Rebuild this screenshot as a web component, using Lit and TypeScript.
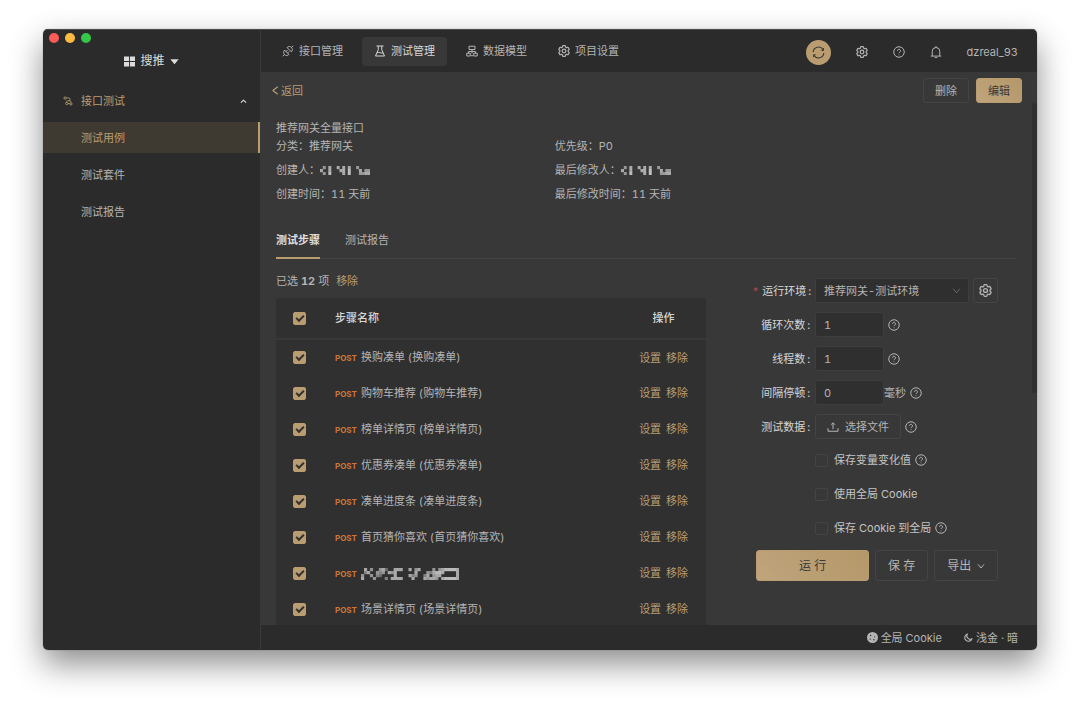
import { LitElement, html, css, svg, nothing } from "lit";
import { customElement, property } from "lit/decorators.js";

const GEAR =
  "M9.594 3.94c.09-.542.56-.94 1.11-.94h2.593c.55 0 1.02.398 1.11.94l.213 1.281c.063.374.313.686.645.87.074.04.147.083.22.127.325.196.72.257 1.075.124l1.217-.456a1.125 1.125 0 0 1 1.37.49l1.296 2.247a1.125 1.125 0 0 1-.26 1.431l-1.003.827c-.293.241-.438.613-.43.992a7.723 7.723 0 0 1 0 .255c-.008.378.137.75.43.991l1.004.827c.424.35.534.955.26 1.43l-1.298 2.247a1.125 1.125 0 0 1-1.369.491l-1.217-.456c-.355-.133-.75-.072-1.076.124a6.47 6.47 0 0 1-.22.128c-.331.183-.581.495-.644.869l-.213 1.281c-.09.543-.56.94-1.11.94h-2.594c-.55 0-1.019-.398-1.11-.94l-.213-1.281c-.062-.374-.312-.686-.644-.87a6.52 6.52 0 0 1-.22-.127c-.325-.196-.72-.257-1.076-.124l-1.217.456a1.125 1.125 0 0 1-1.369-.49l-1.297-2.247a1.125 1.125 0 0 1 .26-1.431l1.004-.827c.292-.24.437-.613.43-.991a6.932 6.932 0 0 1 0-.255c.007-.38-.138-.751-.43-.992l-1.004-.827a1.125 1.125 0 0 1-.26-1.43l1.297-2.247a1.125 1.125 0 0 1 1.37-.491l1.216.456c.356.133.751.072 1.076-.124.072-.044.146-.086.22-.128.332-.183.582-.495.644-.869l.214-1.28Z";

const ICONS: Record<string, unknown> = {
  gear: svg`<g transform="translate(-2.4 -2.4) scale(1.2)"><path d=${GEAR}/><circle cx="12" cy="12" r="3"/></g>`,
  help: svg`<circle cx="12" cy="12" r="10.5"/><path d="M9 9.6a3 3 0 1 1 4.6 2.5c-1 .6-1.6 1.1-1.6 2.2"/><path d="M12 17v1.4"/>`,
  bell: svg`<path d="M4.500 20V10.500a7.500 7.500 0 0 1 15 0V20M1.500 20.200h21M12 0v3M9.500 23.200h5"/>`,
  sync: svg`<path d="M2.200 11A9.800 9.800 0 0 1 20.500 7M21.800 13A9.800 9.800 0 0 1 3.500 17"/><path d="M21 3.500V8h-3.500M3 20.500V16h3.500"/>`,
  api: svg`<path d="M1.500 22.500 5 19M5.200 10.200l8.600 8.600c-2.600 2.900-6.300 2.900-8.600.6s-2.600-6.300 0-9.200ZM19 5l3.500-3.500M18.800 13.800l-8.600-8.600c2.600-2.900 6.300-2.900 8.600-.6s2.600 6.300 0 9.200ZM8 13l3-3M11 16l3-3"/>`,
  flask: svg`<path d="M5 2h14M8.500 2v7.500L3 22h18L15.500 9.500V2M6 15.500c3-2 8 1.600 12 0"/>`,
  model: svg`<path d="M6 2.500h12V9H6ZM12 9v8M5 16.500V13h14v3.500M1.500 16.500h7V22h-7ZM15.500 16.500h7V22h-7ZM10 21.500h4"/>`,
  branch: svg`<circle cx="5" cy="5" r="2.800"/><circle cx="19" cy="19" r="2.800"/><circle cx="9" cy="18" r="2.800"/><path d="M8 4.500h5.500a3.500 3.500 0 0 1 0 7H11a3.500 3.500 0 0 0-3 3.500M12 18h4M13 11.500h3a3 3 0 0 1 3 4.500"/>`,
  left: svg`<path d="M18 2 5 12l13 10"/>`,
  down: svg`<path d="M3 7l9 11 9-11"/>`,
  up: svg`<path d="M3 16l9-9 9 9"/>`,
  upload: svg`<path d="M2 14.500v6h20v-6M12 16V4M8 7.500l4-4 4 4"/>`,
  moon: svg`<path d="M9 2.500A10 10 0 1 0 21.500 15 9 9 0 0 1 9 2.500Z"/>`,
};

const FILLED: Record<string, unknown> = {
  grid: svg`<path d="M0 1h11v10H0ZM13 1h11v10H13ZM0 13h11v10H0ZM13 13h11v10H13Z"/>`,
  caret: svg`<path d="M1 6h22L12 19Z"/>`,
  cookie: svg`<path fill-rule="evenodd" d="M12 0a12 12 0 1 0 0 24a12 12 0 0 0 0-24ZM8 6a1.500 1.500 0 1 1 0 3a1.500 1.500 0 0 1 0-3ZM16.500 9a1.300 1.300 0 1 1 0 2.600a1.300 1.300 0 0 1 0-2.600ZM7 14a1.500 1.500 0 1 1 0 3a1.500 1.500 0 0 1 0-3ZM15 15.500a1.500 1.500 0 1 1 0 3a1.500 1.500 0 0 1 0-3Z"/>`,
};

@customElement("ui-icon")
class UiIcon extends LitElement {
  @property() name = "";
  @property({ type: Number }) size = 12;
  @property({ type: Number }) stroke = 2;

  static styles = css`
    :host {
      display: inline-flex;
      flex: none;
    }
    svg {
      display: block;
      overflow: visible;
    }
  `;

  render() {
    const filled = this.name in FILLED;
    return html`<svg
      width=${this.size}
      height=${this.size}
      viewBox="0 0 24 24"
      fill=${filled ? "currentColor" : "none"}
      stroke=${filled ? "none" : "currentColor"}
      stroke-width=${this.stroke}
      stroke-linejoin="round"
      aria-hidden="true"
    >
      ${filled ? FILLED[this.name] : ICONS[this.name]}
    </svg>`;
  }
}

// Pixelated stand-ins for masked text; each digit is a brightness, 0 is empty.
const MASKS: Record<string, string[]> = {
  user: ["050600606060050000", "600600066070006055", "050700006070005566"],
  step: [
    "060500563006660060560000505677776",
    "046005450656000000600054677600006",
    "500504300006000064500460566000006",
    "600050004066660006000656650677776",
  ],
};

@customElement("masked-text")
class MaskedText extends LitElement {
  @property() kind = "user";

  static styles = css`
    :host {
      display: inline-flex;
      vertical-align: middle;
    }
  `;

  render() {
    const rows = MASKS[this.kind];
    const w = this.kind === "user" ? 50 : 98;
    const h = this.kind === "user" ? 9 : 12;
    const cw = w / rows[0].length;
    const ch = h / rows.length;
    return html`<svg width=${w} height=${h} role="img" aria-label="已隐藏">
      ${rows.map((r, y) =>
        [...r].map((v, x) =>
          v === "0"
            ? nothing
            : svg`<rect x=${x * cw} y=${y * ch} width=${cw + 0.2} height=${ch + 0.2} fill="#d0d0d0" opacity=${Number(v) / 8}/>`
        )
      )}
    </svg>`;
  }
}

const STEPS = ["换购凑单", "购物车推荐", "榜单详情页", "优惠券凑单", "凑单进度条", "首页猜你喜欢", "", "场景详情页"];

@customElement("app-root")
class AppRoot extends LitElement {
  static styles = css`
    :host {
      display: block;
      box-sizing: border-box;
      height: 100vh;
      padding: 29px 43px 57px;
      background: #fff;
      color: #b4b4b4;
      font: 11px/16px Inter, "Noto Sans CJK SC", sans-serif;
      font-variant-numeric: tabular-nums;
      --gold: #b99d71;
      --line: #444;
    }
    * {
      box-sizing: border-box;
    }
    button,
    input,
    select {
      font: inherit;
      color: inherit;
      margin: 0;
    }
    button {
      border: 0;
      padding: 0;
      background: none;
      white-space: nowrap;
    }
    a {
      color: inherit;
      text-decoration: none;
    }
    .window {
      display: grid;
      grid-template-columns: 218px minmax(0, 1fr);
      grid-template-rows: minmax(0, 1fr);
      height: 100%;
      border-radius: 5px;
      overflow: hidden;
      background: #2b2b2b;
    }
    .shadow {
      height: 100%;
      border-radius: 5px;
      box-shadow: 0 0 1px rgba(0, 0, 0, 0.6), 0 14px 32px rgba(0, 0, 0, 0.45);
    }
    .sidebar {
      border-right: 1px solid #393939;
      border-top: 1px solid #4b4b4b;
    }
    .lights {
      display: flex;
      gap: 6px;
      padding: 3px 6px 0;
    }
    .light {
      width: 10px;
      height: 10px;
      border-radius: 50%;
      background: #fc5b57;
    }
    .light.yellow {
      background: #fdbc40;
    }
    .light.green {
      background: #34c84a;
    }
    .project {
      display: flex;
      align-items: center;
      justify-content: center;
      gap: 5px;
      width: 100%;
      margin-top: 10px;
      color: #dcdcdc;
      font-size: 12px;
      line-height: 16px;
    }
    .group {
      display: flex;
      align-items: center;
      width: 100%;
      height: 30px;
      margin-top: 17px;
      padding: 0 13px 0 20px;
      gap: 8px;
      color: var(--gold);
    }
    .group .grow {
      flex: 1;
      text-align: left;
    }
    .group .arrow {
      color: #d5d5d5;
    }
    .entry {
      display: flex;
      align-items: center;
      height: 31px;
      margin: 6px 0;
      padding-left: 38px;
    }
    .entry.active {
      background: #3e3931;
      color: var(--gold);
      border-right: 2px solid var(--gold);
    }
    .main {
      display: grid;
      grid-template-rows: 43px minmax(0, 1fr) 25px;
      min-width: 0;
    }
    .topbar {
      display: flex;
      align-items: center;
      justify-content: space-between;
      padding: 0 19px 0 9px;
      border-top: 1px solid #4b4b4b;
    }
    .nav {
      display: flex;
      gap: 7px;
    }
    .nav a {
      display: flex;
      align-items: center;
      gap: 5px;
      height: 29px;
      padding: 0 12px;
      border-radius: 4px;
    }
    .nav a.active {
      background: #383838;
      color: #d6d6d6;
    }
    .tools {
      display: flex;
      align-items: center;
      gap: 25px;
      padding-top: 2px;
    }
    .tools button {
      display: flex;
    }
    .tools .sync {
      align-items: center;
      justify-content: center;
      width: 25px;
      height: 25px;
      border-radius: 50%;
      background: var(--gold);
      color: #383838;
    }
    .page {
      position: relative;
      overflow: hidden;
      background: #383838;
    }
    .thumb {
      position: absolute;
      top: 31px;
      right: 0;
      width: 5px;
      height: 290px;
      border-radius: 3px;
      background: #2f2f2f;
    }
    .actions {
      display: flex;
      align-items: center;
      gap: 7px;
      padding: 6px 15px 6px 10px;
    }
    .back {
      display: flex;
      align-items: center;
      gap: 1px;
      margin-right: auto;
      color: var(--gold);
    }
    .btn {
      display: inline-flex;
      align-items: center;
      justify-content: center;
      height: 25px;
      padding: 0 11px;
      border: 1px solid var(--line);
      border-radius: 3px;
    }
    .btn.primary {
      border-color: var(--gold);
      background: linear-gradient(45deg, #bfa47d, #b49869);
      color: #383838;
    }
    .content {
      padding: 11px 21px 0 15px;
    }
    .title {
      margin: 0 0 2px;
      font-size: 11px;
      font-weight: 400;
    }
    .facts {
      display: grid;
      grid-template-columns: 3fr 5fr;
      gap: 8px 2px;
      margin: 0;
    }
    .facts div {
      display: flex;
    }
    .facts dd {
      display: flex;
      align-items: center;
      margin: 0;
    }
    .tabs {
      display: flex;
      gap: 25px;
      margin-top: 22px;
      border-bottom: 1px solid var(--line);
    }
    .tabs button {
      height: 35px;
      margin-bottom: -1px;
      padding-bottom: 1px;
      border-bottom: 2px solid transparent;
    }
    .tabs .active {
      border-color: var(--gold);
      color: #dedede;
      font-weight: 700;
    }
    .columns {
      display: grid;
      grid-template-columns: minmax(0, 163fr) minmax(0, 100fr);
      gap: 46px;
    }
    .picked {
      margin: 0;
      padding: 14px 0 9px;
    }
    .picked button {
      margin-left: 4px;
    }
    .gold {
      color: var(--gold);
    }
    table {
      width: 100%;
      table-layout: fixed;
      border-collapse: collapse;
      border-radius: 3px;
      background: #303030;
    }
    th,
    td {
      height: 36px;
      padding: 0;
      text-align: left;
      font-weight: 400;
    }
    th {
      height: 41px;
      border-bottom: 2px solid #383838;
      color: #d6d6d6;
      font-weight: 500;
    }
    .pick {
      width: 59px;
      padding-left: 17px;
    }
    .ops {
      width: 85px;
      text-align: center;
    }
    .ops button + button {
      margin-left: 2px;
    }
    .post {
      margin-right: 1px;
      color: #cd7635;
      font-size: 8px;
      font-weight: 700;
    }
    input[type="checkbox"] {
      appearance: none;
      display: grid;
      place-items: center;
      flex: none;
      width: 13px;
      height: 13px;
      border: 1px solid var(--line);
      border-radius: 2px;
    }
    input[type="checkbox"]:checked {
      border-color: var(--gold);
      background: var(--gold);
    }
    input[type="checkbox"]:checked::after {
      content: "";
      box-sizing: border-box;
      width: 8px;
      height: 5px;
      margin-top: -2px;
      border: solid #303030;
      border-width: 0 0 2px 2px;
      transform: rotate(-45deg);
    }
    .form {
      display: grid;
      gap: 10px;
      align-content: start;
      padding-top: 19px;
    }
    .row {
      display: grid;
      grid-template-columns: 59px minmax(0, 1fr);
      gap: 4px;
      align-items: center;
      height: 24px;
    }
    .caption {
      color: #d6d6d6;
      white-space: nowrap;
      text-align: right;
    }
    .caption::after {
      content: ":";
      margin: 0 1px 0 2px;
    }
    .required::before {
      content: "*";
      margin-right: 3px;
      color: #a8484c;
    }
    .control {
      display: flex;
      align-items: center;
      gap: 4px;
    }
    .control.check {
      grid-column: 2;
    }
    .control.check label {
      padding-left: 2px;
      color: #c4c4c4;
    }
    .tight {
      gap: 0;
    }
    .tight ui-icon {
      margin-left: 4px;
    }
    .number,
    .select select {
      height: 25px;
      border: 1px solid #3e3e3e;
      border-radius: 3px;
      background: #2f2f2f;
      padding: 0 8px;
    }
    .number {
      width: 69px;
    }
    .select {
      display: grid;
      width: 154px;
      align-items: center;
    }
    .select select {
      appearance: none;
      grid-area: 1 / 1;
      width: 100%;
    }
    .select ui-icon {
      grid-area: 1 / 1;
      justify-self: end;
      margin-right: 8px;
      color: #777;
      pointer-events: none;
    }
    .square {
      width: 25px;
      padding: 0;
    }
    .upload {
      gap: 6px;
    }
    .submit {
      display: flex;
      gap: 6px;
      padding-left: 4px;
      font-size: 12px;
    }
    .submit .btn {
      height: 31px;
      gap: 6px;
      padding: 0 12px;
    }
    .submit .run {
      flex: 0 1 113px;
    }
    .footer {
      display: flex;
      align-items: center;
      justify-content: flex-end;
      gap: 22px;
      padding-right: 19px;
    }
    .footer button {
      display: flex;
      align-items: center;
      gap: 3px;
    }
  `;

  private numberRow(id: string, label: string, value: string, unit = "") {
    return html`<div class="row">
      <label class="caption" for=${id}>${label}</label>
      <div class="control ${unit ? "tight" : ""}">
        <input class="number" id=${id} type="text" inputmode="numeric" .value=${value} />
        ${unit ? html`<span>${unit}</span>` : nothing}
        <ui-icon name="help"></ui-icon>
      </div>
    </div>`;
  }

  private checkRow(id: string, label: string, help: boolean) {
    return html`<div class="row">
      <div class="control check">
        <input type="checkbox" id=${id} />
        <label for=${id}>${label}</label>
        ${help ? html`<ui-icon name="help"></ui-icon>` : nothing}
      </div>
    </div>`;
  }

  private stepRow(name: string) {
    return html`<tr>
      <td class="pick"><input type="checkbox" aria-label=${name || "步骤"} checked /></td>
      <td>
        <span class="post">POST</span>
        ${name ? `${name} (${name})` : html`<masked-text kind="step"></masked-text>`}
      </td>
      <td class="ops gold"><button>设置</button> <button>移除</button></td>
    </tr>`;
  }

  render() {
    return html`<div class="shadow">
      <div class="window">
        <aside class="sidebar">
          <div class="lights">
            <span class="light"></span><span class="light yellow"></span><span class="light green"></span>
          </div>
          <button class="project">
            <ui-icon name="grid" size="11"></ui-icon>搜推<ui-icon name="caret" size="9"></ui-icon>
          </button>
          <button class="group">
            <ui-icon name="branch" size="10"></ui-icon><span class="grow">接口测试</span>
            <ui-icon class="arrow" name="up" size="7" stroke="4"></ui-icon>
          </button>
          <nav>
            <a class="entry active" href="#cases">测试用例</a>
            <a class="entry" href="#suites">测试套件</a>
            <a class="entry" href="#reports">测试报告</a>
          </nav>
        </aside>
        <div class="main">
          <header class="topbar">
            <nav class="nav">
              <a href="#api"><ui-icon name="api"></ui-icon>接口管理</a>
              <a class="active" href="#test"><ui-icon name="flask"></ui-icon>测试管理</a>
              <a href="#model"><ui-icon name="model"></ui-icon>数据模型</a>
              <a href="#settings"><ui-icon name="gear"></ui-icon>项目设置</a>
            </nav>
            <div class="tools">
              <button class="sync" aria-label="同步"><ui-icon name="sync" size="13"></ui-icon></button>
              <button aria-label="设置"><ui-icon name="gear"></ui-icon></button>
              <button aria-label="帮助"><ui-icon name="help"></ui-icon></button>
              <button aria-label="通知"><ui-icon name="bell"></ui-icon></button>
              <span>dzreal_93</span>
            </div>
          </header>
          <main class="page">
            <div class="actions">
              <a class="back" href="#back"><ui-icon name="left" size="9" stroke="3"></ui-icon>返回</a>
              <button class="btn">删除</button>
              <button class="btn primary">编辑</button>
            </div>
            <div class="content">
              <h1 class="title">推荐网关全量接口</h1>
              <dl class="facts">
                <div><dt>分类：</dt><dd>推荐网关</dd></div>
                <div><dt>优先级：</dt><dd>P0</dd></div>
                <div><dt>创建人：</dt><dd><masked-text></masked-text></dd></div>
                <div><dt>最后修改人：</dt><dd><masked-text></masked-text></dd></div>
                <div><dt>创建时间：</dt><dd>11 天前</dd></div>
                <div><dt>最后修改时间：</dt><dd>11 天前</dd></div>
              </dl>
              <div class="tabs" role="tablist">
                <button class="active" role="tab" aria-selected="true">测试步骤</button>
                <button role="tab" aria-selected="false">测试报告</button>
              </div>
              <div class="columns">
                <section>
                  <p class="picked">已选 <b>12</b> 项 <button class="gold">移除</button></p>
                  <table>
                    <thead>
                      <tr>
                        <th class="pick"><input type="checkbox" aria-label="全选" checked /></th>
                        <th>步骤名称</th>
                        <th class="ops">操作</th>
                      </tr>
                    </thead>
                    <tbody>
                      ${STEPS.map((s) => this.stepRow(s))}
                    </tbody>
                  </table>
                </section>
                <form class="form" @submit=${(e: Event) => e.preventDefault()}>
                  <div class="row">
                    <label class="caption required" for="env">运行环境</label>
                    <div class="control">
                      <div class="select">
                        <select id="env"><option>推荐网关-测试环境</option></select>
                        <ui-icon name="down" size="9"></ui-icon>
                      </div>
                      <button class="btn square" type="button" aria-label="环境设置">
                        <ui-icon name="gear" size="13"></ui-icon>
                      </button>
                    </div>
                  </div>
                  ${this.numberRow("loops", "循环次数", "1")} ${this.numberRow("threads", "线程数", "1")}
                  ${this.numberRow("delay", "间隔停顿", "0", "毫秒")}
                  <div class="row">
                    <label class="caption" for="file">测试数据</label>
                    <div class="control">
                      <button class="btn upload" id="file" type="button">
                        <ui-icon name="upload"></ui-icon>选择文件
                      </button>
                      <ui-icon name="help"></ui-icon>
                    </div>
                  </div>
                  ${this.checkRow("keep", "保存变量变化值", true)} ${this.checkRow("use", "使用全局 Cookie", false)}
                  ${this.checkRow("store", "保存 Cookie 到全局", true)}
                  <div class="submit">
                    <button class="btn primary run">运 行</button>
                    <button class="btn" type="button">保 存</button>
                    <button class="btn" type="button">导出<ui-icon name="down" size="8" stroke="3"></ui-icon></button>
                  </div>
                </form>
              </div>
            </div>
            <div class="thumb"></div>
          </main>
          <footer class="footer">
            <button><ui-icon name="cookie" size="11"></ui-icon>全局 Cookie</button>
            <button><ui-icon name="moon" size="9" stroke="3"></ui-icon>浅金 · 暗</button>
          </footer>
        </div>
      </div>
    </div>`;
  }
}
